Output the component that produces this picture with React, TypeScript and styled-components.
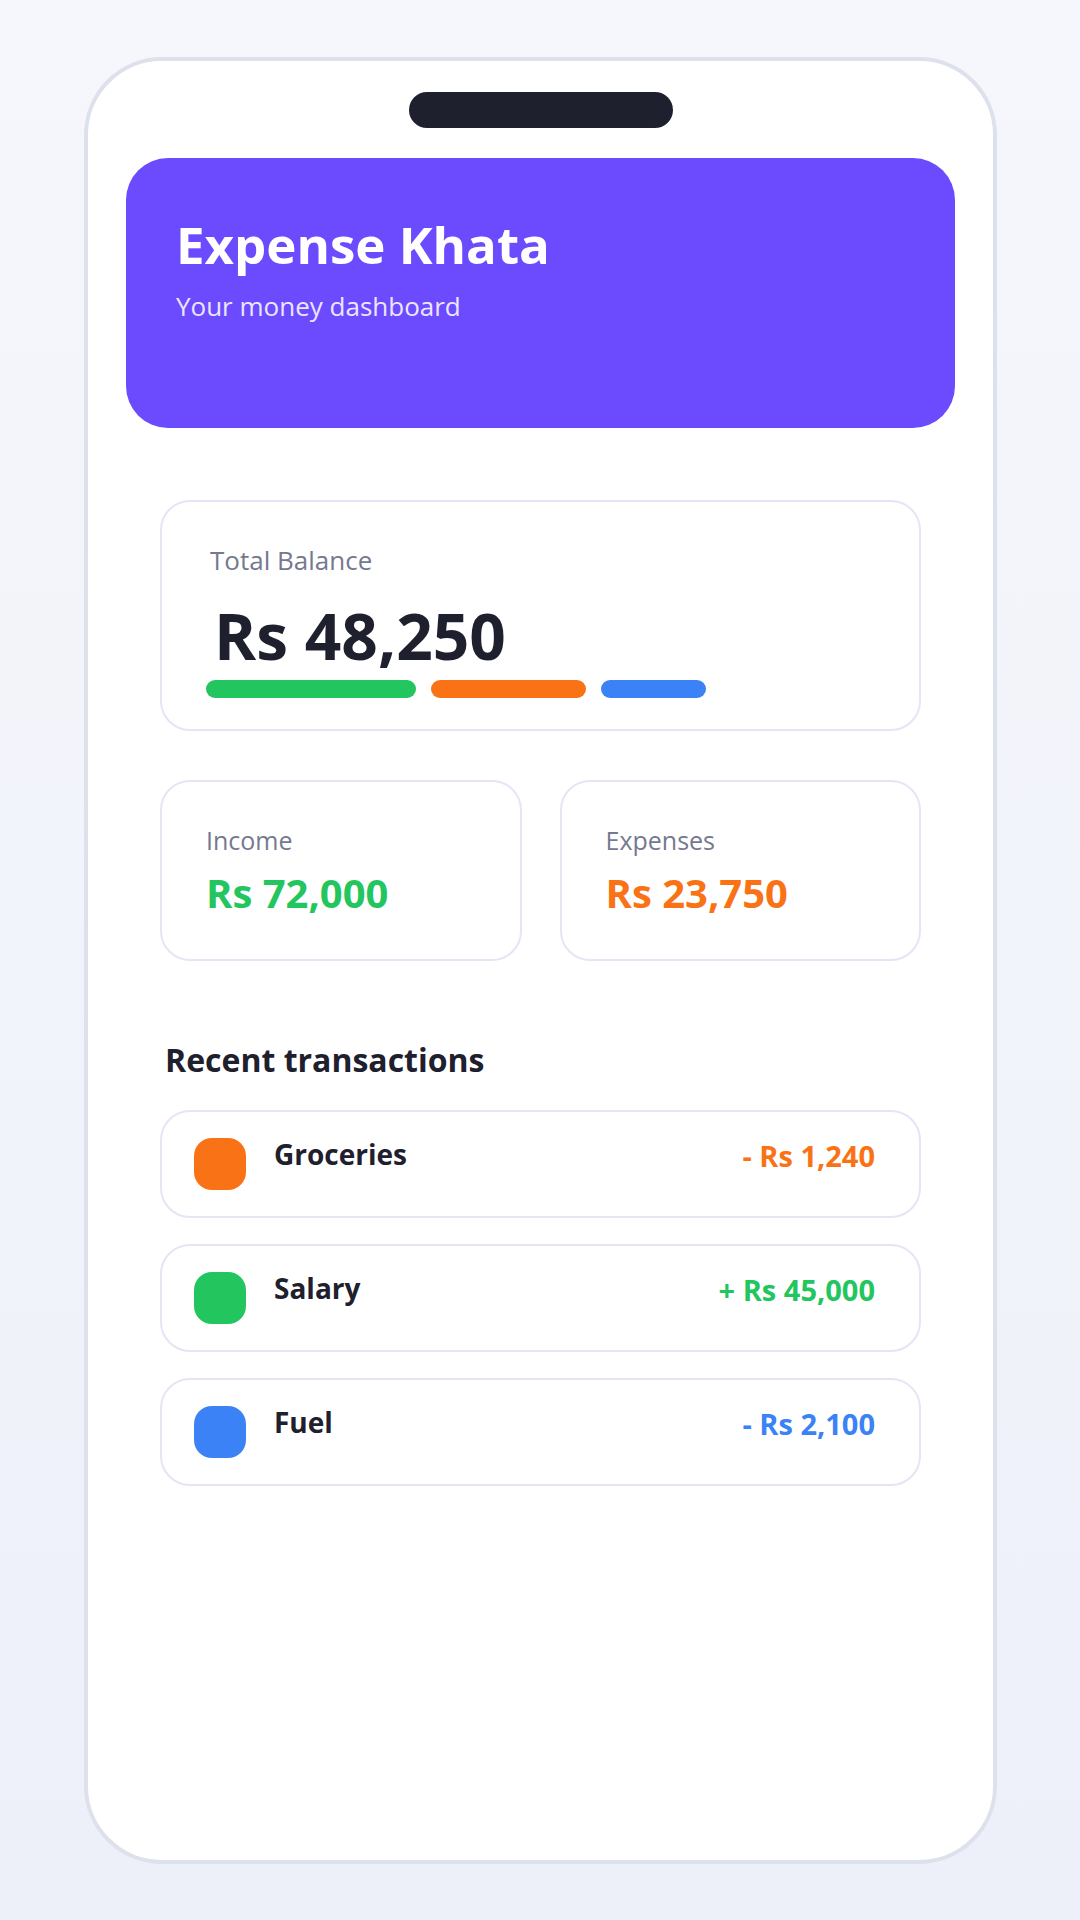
import styled, { createGlobalStyle } from 'styled-components';

const colors = {
  primary: '#6c4bff',
  ink: '#1f202e',
  muted: '#74798f',
  line: '#e6e4f5',
  green: '#22c55e',
  orange: '#f97316',
  blue: '#3b82f6',
};

const GlobalStyle = createGlobalStyle`
  *, *::before, *::after {
    box-sizing: border-box;
  }

  body {
    margin: 0;
    font-family: 'Open Sans', 'Noto Sans', sans-serif;
    color: ${colors.ink};
  }

  h1, h2, p, ul {
    margin: 0;
    padding: 0;
  }
`;

const Page = styled.div`
  display: flex;
  min-height: 100vh;
  padding: 57px 83px 56px 84px;
  background: linear-gradient(180deg, #f6f7fc 0%, #edf0f9 100%);
`;

const Phone = styled.main`
  flex: 1;
  display: flex;
  flex-direction: column;
  padding: 31px 38px;
  border: 4px solid #dde1ec;
  border-radius: 78px;
  background: #fff;
`;

const Notch = styled.div`
  align-self: center;
  width: 264px;
  height: 36px;
  border-radius: 18px;
  background: ${colors.ink};
`;

const Header = styled.header`
  min-height: 270px;
  margin-top: 30px;
  padding: 54px 50px;
  border-radius: 42px;
  background: ${colors.primary};
  color: #fff;
`;

const Title = styled.h1`
  font-size: 51px;
  line-height: 64px;
  font-weight: 700;
`;

const Subtitle = styled.p`
  margin-top: 10px;
  font-size: 26px;
  line-height: 40px;
  color: #ebe6ff;
`;

const Content = styled.div`
  display: flex;
  flex-direction: column;
  margin-top: 72px;
  padding: 0 34px;
`;

const Card = styled.section`
  border: 2px solid ${colors.line};
  border-radius: 30px;
  background: #fff;
`;

const BalanceCard = styled(Card)`
  padding: 38px 44px 31px;
`;

const BalanceLabel = styled.p`
  padding-left: 4px;
  font-size: 26px;
  line-height: 40px;
  color: ${colors.muted};
`;

const BalanceAmount = styled.p`
  margin-top: 16px;
  padding-left: 8px;
  font-size: 64px;
  line-height: 80px;
  font-weight: 700;
`;

const Bars = styled.div`
  display: flex;
  gap: 15px;
  margin-top: 4px;
`;

const Bar = styled.div<{ $color: string }>`
  height: 18px;
  border-radius: 9px;
  background: ${({ $color }) => $color};
`;

const Stats = styled.div`
  display: grid;
  grid-template-columns: 1fr 1fr;
  gap: 38px;
  margin-top: 49px;
`;

const StatCard = styled(Card)`
  padding: 40px 44px 41px;
`;

const StatLabel = styled.p`
  font-size: 25px;
  line-height: 36px;
  color: ${colors.muted};
`;

const StatValue = styled.p<{ $color: string }>`
  margin-top: 10px;
  font-size: 40px;
  line-height: 50px;
  font-weight: 700;
  color: ${({ $color }) => $color};
`;

const SectionTitle = styled.h2`
  margin-top: 77px;
  padding-left: 5px;
  font-size: 32px;
  line-height: 44px;
  font-weight: 700;
`;

const TransactionList = styled.ul`
  display: flex;
  flex-direction: column;
  gap: 26px;
  margin-top: 28px;
  list-style: none;
`;

const TransactionRow = styled.li`
  display: flex;
  align-items: flex-start;
  padding: 26px 44px 26px 32px;
  border: 2px solid ${colors.line};
  border-radius: 30px;
`;

const Swatch = styled.span<{ $color: string }>`
  flex: none;
  width: 52px;
  height: 52px;
  margin-right: 28px;
  border-radius: 18px;
  background: ${({ $color }) => $color};
`;

const TransactionName = styled.span`
  flex: 1;
  font-size: 28px;
  line-height: 32px;
  font-weight: 700;
`;

const TransactionAmount = styled.span<{ $color: string }>`
  font-size: 29px;
  line-height: 36px;
  font-weight: 700;
  color: ${({ $color }) => $color};
`;

const breakdown = [
  { color: colors.green, width: 210 },
  { color: colors.orange, width: 155 },
  { color: colors.blue, width: 105 },
];

const stats = [
  { label: 'Income', value: 'Rs 72,000', color: colors.green },
  { label: 'Expenses', value: 'Rs 23,750', color: colors.orange },
];

const transactions = [
  { name: 'Groceries', amount: '- Rs 1,240', color: colors.orange },
  { name: 'Salary', amount: '+ Rs 45,000', color: colors.green },
  { name: 'Fuel', amount: '- Rs 2,100', color: colors.blue },
];

const App = () => (
  <>
    <GlobalStyle />
    <Page>
      <Phone>
        <Notch />
        <Header>
          <Title>Expense Khata</Title>
          <Subtitle>Your money dashboard</Subtitle>
        </Header>
        <Content>
          <BalanceCard>
            <BalanceLabel>Total Balance</BalanceLabel>
            <BalanceAmount>Rs 48,250</BalanceAmount>
            <Bars>
              {breakdown.map(({ color, width }) => (
                <Bar key={color} $color={color} style={{ width }} />
              ))}
            </Bars>
          </BalanceCard>
          <Stats>
            {stats.map(({ label, value, color }) => (
              <StatCard key={label}>
                <StatLabel>{label}</StatLabel>
                <StatValue $color={color}>{value}</StatValue>
              </StatCard>
            ))}
          </Stats>
          <SectionTitle>Recent transactions</SectionTitle>
          <TransactionList>
            {transactions.map(({ name, amount, color }) => (
              <TransactionRow key={name}>
                <Swatch $color={color} />
                <TransactionName>{name}</TransactionName>
                <TransactionAmount $color={color}>{amount}</TransactionAmount>
              </TransactionRow>
            ))}
          </TransactionList>
        </Content>
      </Phone>
    </Page>
  </>
);

export default App;
